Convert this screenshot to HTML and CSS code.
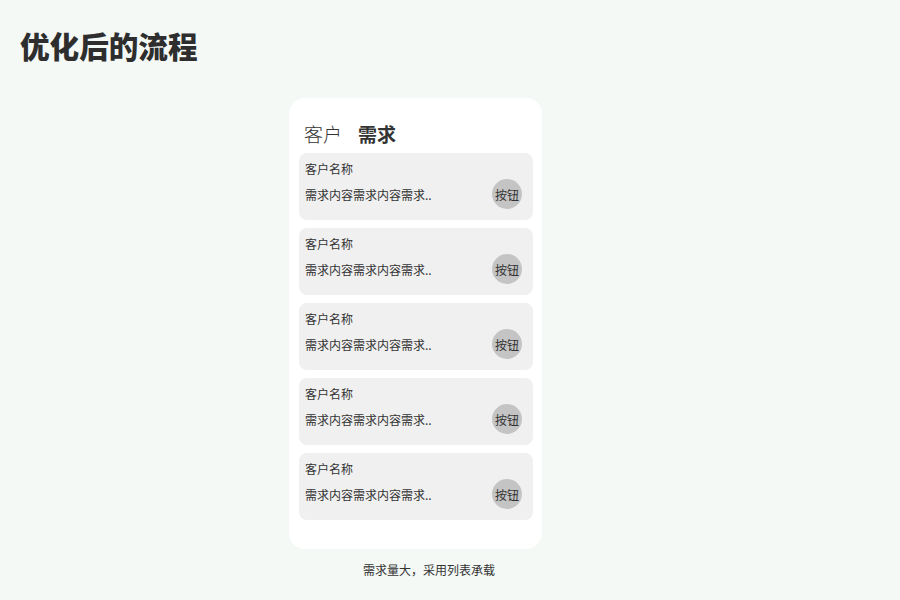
FILE: index.html
```html
<!DOCTYPE html>
<html lang="zh-CN">
<head>
    <meta charset="UTF-8">
    <title>优化后的流程</title>
    <link rel="stylesheet" href="styles.css">
</head>
<body>
    <h1 class="page-title">优化后的流程</h1>
    <div class="stage">
        <div class="phone">
            <div class="phone-head">
                <span class="tab">客户</span>
                <span class="tab active">需求</span>
            </div>
            <div class="list">
                <div class="item">
                    <div class="item-name">客户名称</div>
                    <div class="item-row">
                        <span class="item-desc">需求内容需求内容需求..</span>
                        <button class="item-btn">按钮</button>
                    </div>
                </div>
                <div class="item">
                    <div class="item-name">客户名称</div>
                    <div class="item-row">
                        <span class="item-desc">需求内容需求内容需求..</span>
                        <button class="item-btn">按钮</button>
                    </div>
                </div>
                <div class="item">
                    <div class="item-name">客户名称</div>
                    <div class="item-row">
                        <span class="item-desc">需求内容需求内容需求..</span>
                        <button class="item-btn">按钮</button>
                    </div>
                </div>
                <div class="item">
                    <div class="item-name">客户名称</div>
                    <div class="item-row">
                        <span class="item-desc">需求内容需求内容需求..</span>
                        <button class="item-btn">按钮</button>
                    </div>
                </div>
                <div class="item">
                    <div class="item-name">客户名称</div>
                    <div class="item-row">
                        <span class="item-desc">需求内容需求内容需求..</span>
                        <button class="item-btn">按钮</button>
                    </div>
                </div>
            </div>
        </div>
        <p class="caption">需求量大，采用列表承载</p>
    </div>
</body>
</html>
```

FILE: styles.css
```css
* {
    margin: 0;
    padding: 0;
    box-sizing: border-box;
}
body {
    font-family: "Noto Sans CJK SC", "Noto Sans", sans-serif;
    background-color: #f4f9f6;
    color: #333333;
    width: 900px;
    height: 600px;
    overflow: hidden;
}
.page-title {
    font-size: 29.6px;
    font-weight: 900;
    line-height: 40px;
    padding: 26px 0 0 20px;
    color: #2e2e2e;
}
.stage {
    display: flex;
    flex-direction: column;
    margin-top: 32px;
    margin-left: 289px;
}
.phone {
    width: 253px;
    height: 451px;
    background: #ffffff;
    border-radius: 16px;
    padding: 0 9px 0 10px;
}
.phone-head {
    display: flex;
    gap: 16px;
    height: 55px;
    align-items: center;
    padding: 16px 0 0 5px;
    font-size: 19px;
    color: #333333;
}
.tab {
    font-weight: 300;
}
.tab.active {
    font-weight: 700;
}
.list {
    display: flex;
    flex-direction: column;
    gap: 8px;
}
.item {
    height: 67px;
    background: #f0f0f0;
    border-radius: 8px;
    padding: 7px 11px 0 6px;
}
.item-name {
    font-size: 12px;
    line-height: 18px;
}
.item-row {
    display: flex;
    align-items: center;
    justify-content: space-between;
    margin-top: 1px;
}
.item-desc {
    font-size: 12px;
}
.item-btn {
    width: 30px;
    height: 30px;
    border-radius: 50%;
    border: none;
    background: #c4c4c4;
    color: #333333;
    font-family: inherit;
    font-size: 12px;
    padding: 0;
}
.caption {
    font-size: 12px;
    line-height: 18px;
    margin-top: 12px;
    margin-left: 74px;
    color: #333333;
}
```
